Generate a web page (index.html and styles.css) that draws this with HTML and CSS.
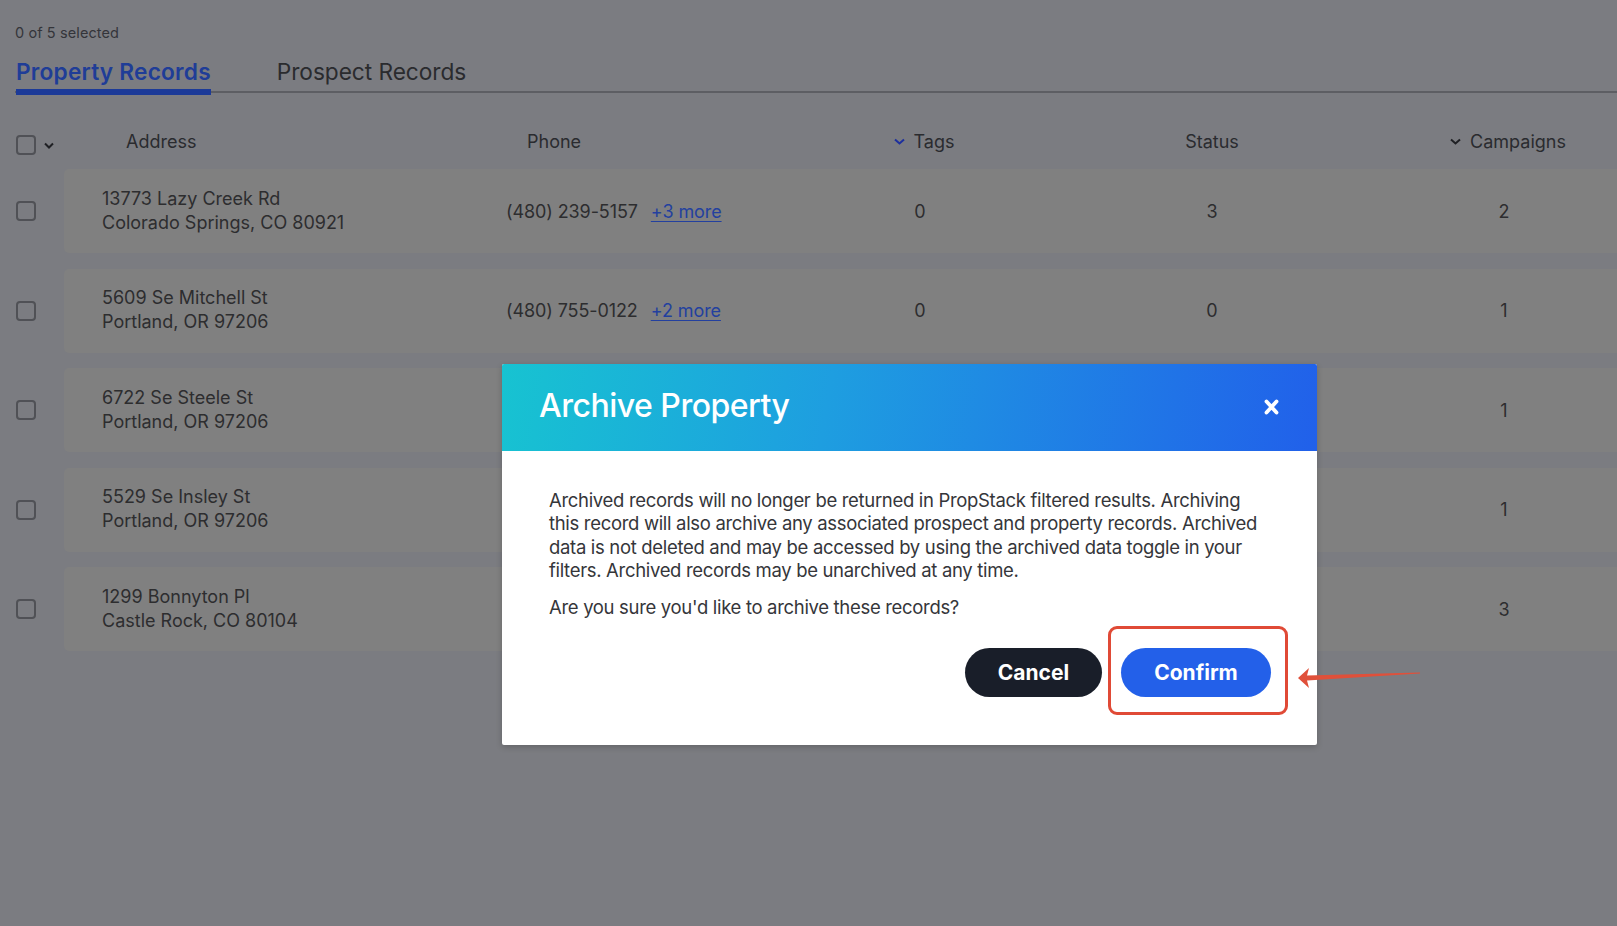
FILE: index.html
```html
<!DOCTYPE html>
<html lang="en">
<head>
<meta charset="utf-8">
<title>Archive Property</title>
<link rel="stylesheet" href="styles.css">
</head>
<body>
<div class="page">
  <div class="count">0 of 5 selected</div>
  <div class="tabs">
    <div class="tab active">Property Records</div>
    <div class="tab">Prospect Records</div>
  </div>

  <div class="head">
    <div class="sel">
      <span class="box"></span>
      <svg class="chev" width="10" height="7" viewBox="0 0 10 7"><path d="M1 1.5 L5 5.5 L9 1.5" fill="none" stroke="#1f2024" stroke-width="2"/></svg>
    </div>
    <div class="cols">
      <div class="h-address">Address</div>
      <div class="h-phone">Phone</div>
      <div class="h-center"><svg class="chev blue" width="11" height="7" viewBox="0 0 11 7"><path d="M1 1.5 L5.5 5.5 L10 1.5" fill="none" stroke="#1d2f9e" stroke-width="2"/></svg>Tags</div>
      <div class="h-center">Status</div>
      <div class="h-center"><svg class="chev" width="11" height="7" viewBox="0 0 11 7"><path d="M1 1.5 L5.5 5.5 L10 1.5" fill="none" stroke="#1f2024" stroke-width="2"/></svg>Campaigns</div>
    </div>
  </div>

  <div class="rows">
    <div class="row">
      <div class="sel"><span class="box"></span></div>
      <div class="card">
        <div class="address">13773 Lazy Creek Rd<br>Colorado Springs, CO 80921</div>
        <div class="phone">(480) 239-5157 <a href="#" class="more">+3 more</a></div>
        <div class="num">0</div>
        <div class="num">3</div>
        <div class="num">2</div>
      </div>
    </div>
    <div class="row">
      <div class="sel"><span class="box"></span></div>
      <div class="card">
        <div class="address">5609 Se Mitchell St<br>Portland, OR 97206</div>
        <div class="phone">(480) 755-0122 <a href="#" class="more">+2 more</a></div>
        <div class="num">0</div>
        <div class="num">0</div>
        <div class="num">1</div>
      </div>
    </div>
    <div class="row">
      <div class="sel"><span class="box"></span></div>
      <div class="card">
        <div class="address">6722 Se Steele St<br>Portland, OR 97206</div>
        <div class="phone"></div>
        <div class="num"></div>
        <div class="num"></div>
        <div class="num">1</div>
      </div>
    </div>
    <div class="row">
      <div class="sel"><span class="box"></span></div>
      <div class="card">
        <div class="address">5529 Se Insley St<br>Portland, OR 97206</div>
        <div class="phone"></div>
        <div class="num"></div>
        <div class="num"></div>
        <div class="num">1</div>
      </div>
    </div>
    <div class="row">
      <div class="sel"><span class="box"></span></div>
      <div class="card">
        <div class="address">1299 Bonnyton Pl<br>Castle Rock, CO 80104</div>
        <div class="phone"></div>
        <div class="num"></div>
        <div class="num"></div>
        <div class="num">3</div>
      </div>
    </div>
  </div>
</div>

<div class="modal">
  <div class="modal-head">
    <h2 class="modal-title">Archive Property</h2>
    <svg class="close" width="15" height="16" viewBox="0 0 15 16"><path d="M2.5 2.5 L12.5 13.5 M12.5 2.5 L2.5 13.5" stroke="#ffffff" stroke-width="3.8" stroke-linecap="round"/></svg>
  </div>
  <div class="modal-body">
    <p class="msg">Archived records will no longer be returned in PropStack filtered results. Archiving<br>this record will also archive any associated prospect and property records. Archived<br>data is not deleted and may be accessed by using the archived data toggle in your<br>filters. Archived records may be unarchived at any time.</p>
    <p class="msg">Are you sure you'd like to archive these records?</p>
    <div class="actions">
      <button class="btn cancel">Cancel</button>
      <button class="btn confirm">Confirm</button>
    </div>
  </div>
  <div class="highlight"></div>
</div>

<svg class="arrow" width="130" height="30" viewBox="0 0 130 30">
  <path d="M2 14 L13 4 L11 11.5 L124 8.6 L124 9.6 L11 16.5 L13 24 Z" fill="#e0503a"/>
</svg>
</body>
</html>
```

FILE: styles.css
```css
* { box-sizing: border-box; }

html, body {
  margin: 0;
  height: 100%;
}

body {
  background: #7b7c81;
  font-family: Inter, "Open Sans", "Liberation Sans", sans-serif;
  color: #2c2c2e;
  overflow: hidden;
  position: relative;
}

.page {
  padding: 25px 0 0 15px;
}

.count {
  font-size: 14.5px;
  line-height: 16px;
  color: #34353a;
  letter-spacing: 0.1px;
}

.tabs {
  display: flex;
  gap: 66px;
  margin-top: 17px;
  border-bottom: 2px solid #5d5e63;
  height: 35px;
  padding-left: 1px;
}

.tab {
  font-size: 22.7px;
  line-height: 28px;
  color: #2a2b2e;
  height: 37px;
  letter-spacing: -0.05px;
}

.tab.active {
  color: #1f3d97;
  font-weight: 600;
  border-bottom: 6px solid #1c3a98;
  position: relative;
  z-index: 1;
  letter-spacing: 0.2px;
}

.head {
  display: flex;
  align-items: center;
  margin-top: 28px;
  height: 40px;
}

.sel {
  width: 49px;
  flex: none;
  display: flex;
  align-items: center;
  padding-left: 1px;
}

.head .sel {
  margin-top: 8px;
}

.box {
  width: 20px;
  height: 20px;
  border: 2px solid #505156;
  border-radius: 4px;
  display: block;
}

.head .chev {
  margin-left: 8px;
}

.cols {
  flex: 1;
  display: grid;
  grid-template-columns: 404px 268px 292px 292px 292px;
  padding-left: 38px;
  font-size: 18px;
  color: #2a2b2f;
}

.h-address { padding-left: 24px; }
.h-phone { padding-left: 21px; }

.h-center {
  display: flex;
  align-items: center;
  justify-content: center;
  gap: 9px;
}

.rows {
  margin-top: 8px;
  display: flex;
  flex-direction: column;
  gap: 15.5px;
}

.row {
  display: flex;
  align-items: center;
  height: 84px;
}

.card {
  flex: 1;
  height: 100%;
  background: #808080;
  border-radius: 5px 0 0 5px;
  display: grid;
  grid-template-columns: 404px 268px 292px 292px 292px;
  align-items: center;
  padding-left: 38px;
  font-size: 18px;
  color: #2d2d2f;
}

.address {
  line-height: 24px;
  padding-bottom: 1px;
}

.phone {
  display: flex;
  gap: 13px;
  letter-spacing: -0.1px;
}

.more {
  color: #23409f;
  text-decoration: underline;
  text-underline-offset: 3px;
}

.num {
  text-align: center;
}

/* modal */
.modal {
  position: absolute;
  left: 502px;
  top: 364px;
  width: 815px;
  height: 381px;
  background: #ffffff;
  border-radius: 2px;
  box-shadow: 0 2px 6px rgba(0, 0, 0, 0.2);
}

.modal-head {
  height: 87px;
  background: linear-gradient(100deg, #17c3d1 0%, #1e9ee0 40%, #2160ea 100%);
  display: flex;
  align-items: center;
  justify-content: space-between;
  padding: 0 38px 0 37px;
  border-radius: 2px 2px 0 0;
}

.modal-title {
  margin: 0;
  color: #ffffff;
  font-size: 32px;
  font-weight: 500;
  letter-spacing: -0.5px;
  line-height: 40px;
  padding-bottom: 4px;
}

.close {
  margin-bottom: 2px;
}

.modal-body {
  padding: 38px 46px 0 47px;
}

.msg {
  margin: 0 0 14px;
  font-size: 18.5px;
  line-height: 23.3px;
  color: #35363a;
  letter-spacing: -0.32px;
}

.actions {
  display: flex;
  justify-content: flex-end;
  gap: 19px;
  margin-top: 29px;
}

.btn {
  height: 49px;
  border: none;
  border-radius: 25px;
  font-family: Inter, "Liberation Sans", sans-serif;
  font-weight: 700;
  font-size: 21px;
  color: #ffffff;
  padding: 0;
}

.cancel {
  width: 137px;
  background: #191e29;
}

.confirm {
  width: 150px;
  background: #2360e9;
}

.highlight {
  position: absolute;
  left: 606px;
  top: 262px;
  width: 180px;
  height: 89px;
  border: 3px solid #e04a36;
  border-radius: 9px;
}

.arrow {
  position: absolute;
  left: 1296px;
  top: 664px;
}
```
